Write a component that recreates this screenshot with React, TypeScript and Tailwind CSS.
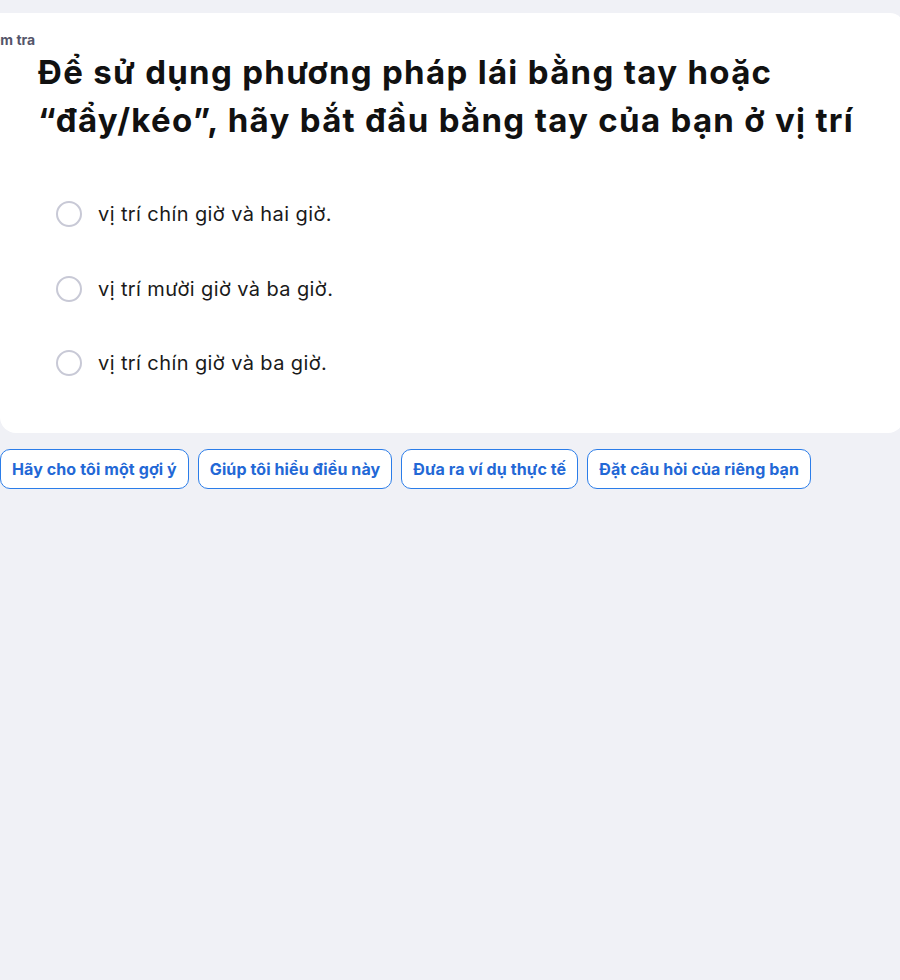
import React from 'react';

const options = [
	'vị trí chín giờ và hai giờ.',
	'vị trí mười giờ và ba giờ.',
	'vị trí chín giờ và ba giờ.',
];

const prompts = [
	'Hãy cho tôi một gợi ý',
	'Giúp tôi hiểu điều này',
	'Đưa ra ví dụ thực tế',
	'Đặt câu hỏi của riêng bạn',
];

const App = () => {
	return (
		<div className="min-h-[980px] w-[900px] overflow-hidden bg-[#f0f1f6] pt-[13px] font-['Inter',sans-serif]">
			<div className="w-[904px] rounded-tr-[14px] rounded-br-[16px] rounded-bl-[16px] bg-white pb-[57px]">
				<div className="pt-[18px] ml-[-22px] text-[14px] font-bold leading-[18px] text-[#55556a]">Kiểm tra</div>
				<h1 className="mt-[-1px] pl-[38px] text-[33px] font-bold leading-[48px] tracking-[1.3px] text-[#111]">
					Để sử dụng phương pháp lái bằng tay hoặc
					<br />
					“đẩy/kéo”, hãy bắt đầu bằng tay của bạn ở vị trí
				</h1>
				<div className="mt-[57px] flex flex-col gap-[48.5px] pl-[56px]">
					{options.map((option) => (
						<label key={option} className="flex h-[26px] items-center gap-[16px] cursor-pointer">
							<span className="h-[26px] w-[26px] shrink-0 rounded-full border-2 border-[#c8c9d6] bg-white" />
							<span className="text-[20px] leading-[26px] tracking-[0.4px] text-[#1a1a1a]">{option}</span>
						</label>
					))}
				</div>
			</div>
			<div className="mt-[16px] flex gap-[9px]">
				{prompts.map((prompt) => (
					<button
						key={prompt}
						className="h-[40px] rounded-[10px] border border-[#2b7de9] bg-white px-[11px] text-[16px] font-bold tracking-[0.1px] text-[#2368d6]"
					>
						{prompt}
					</button>
				))}
			</div>
		</div>
	);
};

export default App;
